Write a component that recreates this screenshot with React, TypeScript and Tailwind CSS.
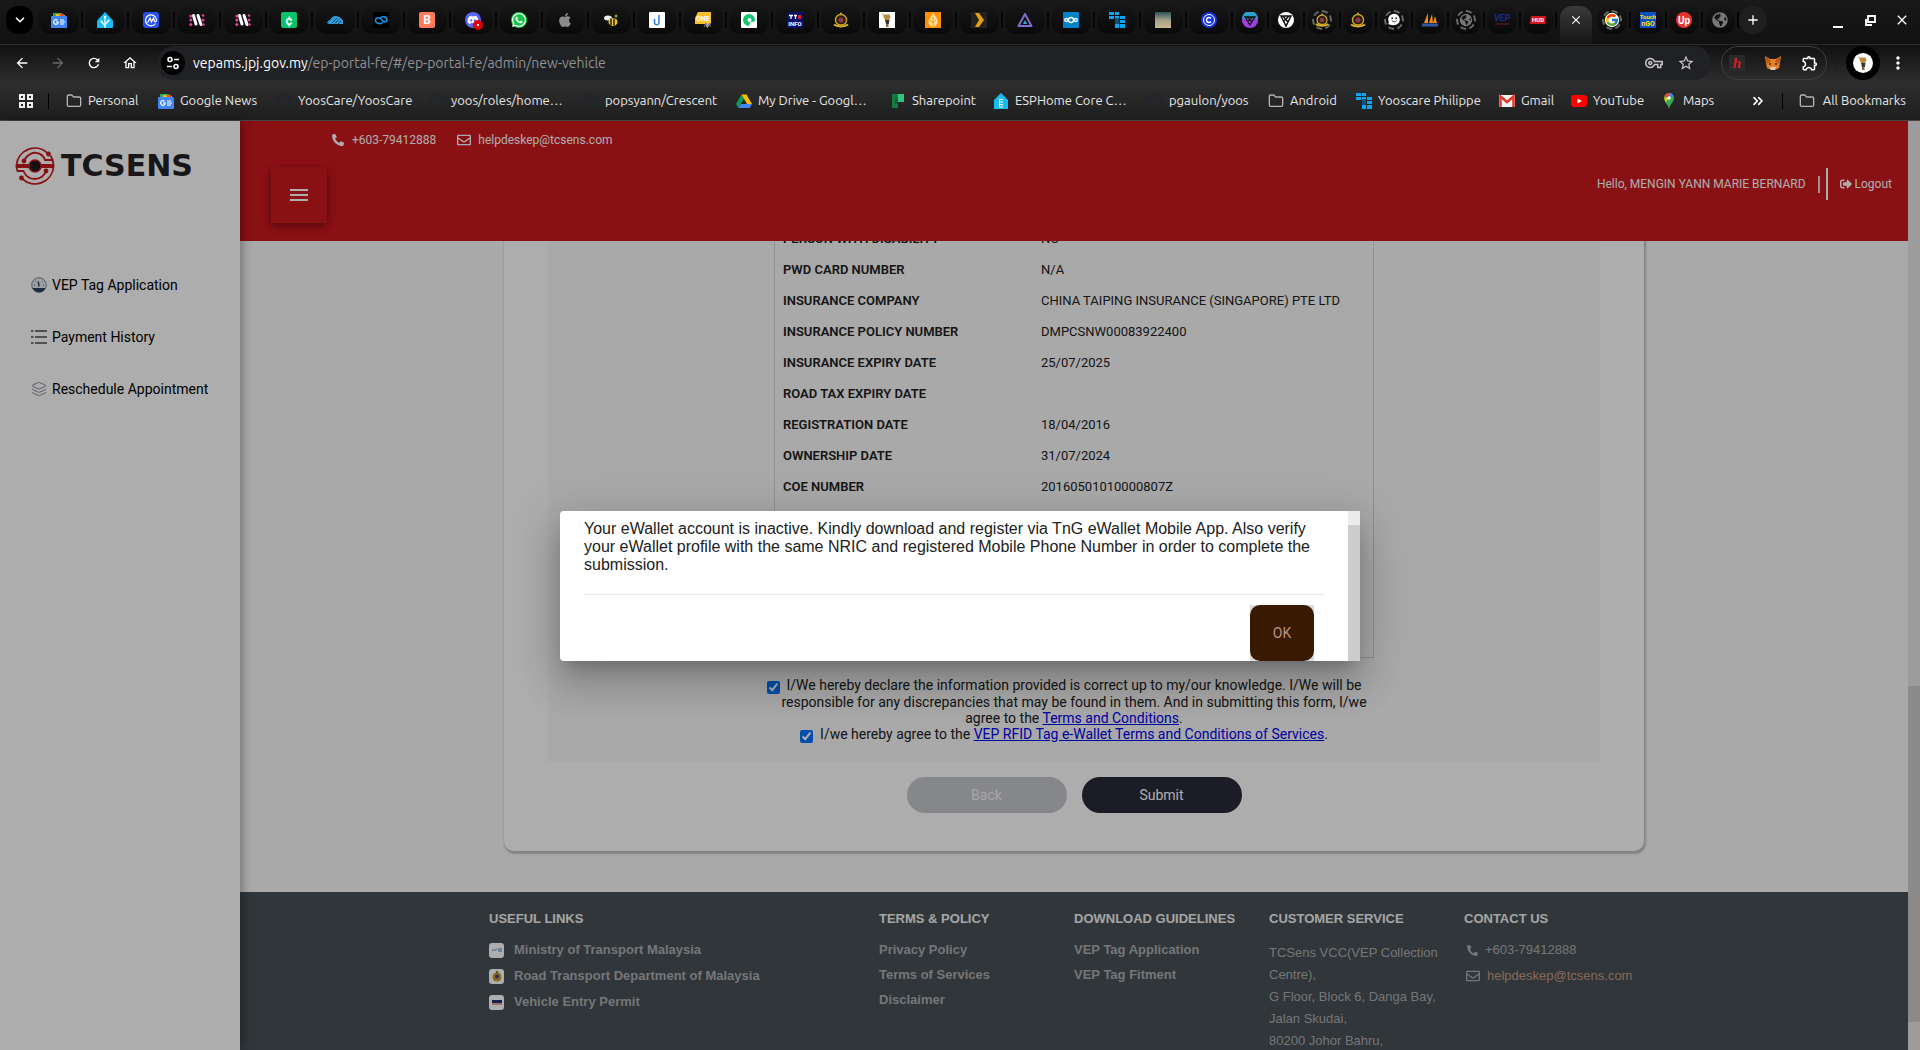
import React from 'react';
import { FaApple, FaGithub, FaPhoneAlt, FaRegEnvelope, FaSignOutAlt, FaWhatsapp, FaDiscord, FaGlobeAmericas } from 'react-icons/fa';
import { FcGoogle } from 'react-icons/fc';
import {
  MdAdd,
  MdArrowBack,
  MdArrowForward,
  MdClose,
  MdMenu,
  MdMoreVert,
  MdOutlineExtension,
  MdOutlineHome,
  MdOutlineVpnKey,
  MdRefresh,
  MdStarBorder,
} from 'react-icons/md';
import { ChevronDown, ChevronsRight, Folder, Layers } from 'lucide-react';

const Svg: React.FC<{ children: React.ReactNode }> = ({ children }) => (
  <svg viewBox="0 0 16 16" className="w-4 h-4 shrink-0">{children}</svg>
);

const Crest: React.FC = () => (
  <Svg>
    <path d="M8 0l2 3.500H6z" fill="#d9b22c" />
    <path d="M2.500 8a5.500 5.500 0 0 1 11 0c0 3-2 5-5.500 5S2.500 11 2.500 8z" fill="#262012" stroke="#c9a62c" strokeWidth="1.400" />
    <circle cx="8" cy="8" r="2.600" fill="#b3262b" />
    <path d="M6.500 8h3" stroke="#3a56b8" strokeWidth="1.500" />
    <path d="M1 12.500c3 2.500 11 2.500 14 0" stroke="#d9b22c" strokeWidth="2" fill="none" />
  </Svg>
);

const Robot: React.FC = () => (
  <Svg>
    <rect width="16" height="16" fill="#fff" />
    <path d="M4.500 2.500h6l1 2.500-1.500 3H6L4.500 5z" fill="#b98a3e" />
    <path d="M6 8h4.500l-.7 4H7z" fill="#3a3328" />
    <path d="M7 12h2.500v3H7z" fill="#8a6a38" />
    <path d="M3 1.500l2 2" stroke="#b98a3e" />
  </Svg>
);

const GoogleNews: React.FC = () => (
  <Svg>
    <path d="M2 1h9l1 4H2z" fill="#34a853" />
    <path d="M5 2l9 1-.5 3H5z" fill="#fbbc04" />
    <path d="M9 1.500l4 .5v3H9z" fill="#ea4335" />
    <rect y="4" width="16" height="12" rx="1" fill="#4285f4" />
    <path d="M5 10.200h2.200A2.300 2.300 0 1 1 6.500 8.300M9 8h4M9 10h5M9 12h4" stroke="#fff" strokeWidth="1.200" fill="none" />
  </Svg>
);

const HomeAssistant: React.FC = () => (
  <Svg>
    <path d="M8 0l8 8.500V15a1 1 0 0 1-1 1H1a1 1 0 0 1-1-1V8.500z" fill="#18bcf2" />
    <path d="M8 5v11M8 13.500L4.500 10M8 12.500l3.500-3.500" stroke="#fff" strokeWidth="1.200" fill="none" />
    <circle cx="8" cy="5" r="1.200" fill="#fff" />
    <circle cx="4.500" cy="9.500" r="1.100" fill="#fff" />
    <circle cx="11.500" cy="8.500" r="1.100" fill="#fff" />
  </Svg>
);

const Blocks: React.FC = () => (
  <Svg>
    <path
      d="M0 0h5v3H0zM6 0h4v3H6zM0 4h5v3H0zM6 4h4v3H6zM11 4h5v3h-5zM6 8h4v3H6zM11 8h5v3h-5zM6 12h4v4H6zM11 12h5v4h-5z"
      fill="#0aa5f5"
    />
    <path d="M6 6h4v6H6z" fill="#07557d" />
  </Svg>
);

const PinkDots: React.FC = () => (
  <Svg>
    <path d="M4.500 3.500L7 12M9 3.500l3 9" stroke="#fff" strokeWidth="3" fill="none" strokeLinecap="round" />
    <g fill="#e63fa0">
      <circle cx="1.800" cy="4" r="1.500" />
      <circle cx="1.800" cy="8" r="1.500" />
      <circle cx="1.800" cy="12.500" r="1.500" />
      <circle cx="14" cy="3.500" r="1.300" />
      <circle cx="14" cy="8" r="1.500" />
      <circle cx="14.500" cy="12.500" r="1.300" />
    </g>
  </Svg>
);

// Letter tile used by the simpler favicons
const Tile: React.FC<{ text: string; bg: string; fg?: string; size?: number }> = ({ text, bg, fg = '#fff', size = 10 }) => (
  <Svg>
    <rect width="16" height="16" rx="2" fill={bg} />
    <text x="8" y="8" dominantBaseline="central" textAnchor="middle" fontFamily="Roboto, sans-serif" fontWeight="700" fontSize={size} fill={fg}>
      {text}
    </text>
  </Svg>
);

const DashedRing: React.FC<{ children: React.ReactNode }> = ({ children }) => (
  <span className="flex items-center justify-center w-5 h-5 rounded-full border-2 border-dashed border-[#6a6a6a]">
    <span className="flex scale-90">{children}</span>
  </span>
);

const wideTabs: React.ReactNode[] = [
  <GoogleNews />,
  <HomeAssistant />,
  <Svg>
    <rect width="16" height="16" rx="3" fill="#2650f0" />
    <path d="M12.500 11.500A5.500 5.500 0 1 1 13.500 8c0 2-2 2.500-2.300.5L10.500 6 8.500 10 7 6l-2.200 4.500" stroke="#fff" strokeWidth="1.200" fill="none" />
  </Svg>,
  <PinkDots />,
  <PinkDots />,
  <Tile text="¢" bg="#09c16c" size={13} />,
  <Svg>
    <path d="M0 11a4 4 0 0 1 3-3 6 6 0 0 1 9-3 6 6 0 0 1 4 7H2z" fill="#2d9cdb" />
    <path d="M5 11l5-5M8 11.500l4-4M11 12l3-3" stroke="#0a3e5e" />
  </Svg>,
  <Svg>
    <rect width="16" height="16" fill="#000" />
    <path d="M10 10.500C7 13 2 11 2.500 8S7 5 9 8s5 2 5-.5S9 3.500 7 6" stroke="#1392e6" strokeWidth="1.600" fill="none" />
  </Svg>,
  <Tile text="B" bg="#ff7a59" size={12} />,
  <span className="relative flex">
    <FaDiscord className="w-4 h-4 text-white bg-[#5865f2] rounded-full p-0.5" />
    <span className="absolute -right-0.5 -bottom-0.5 w-2.5 h-2.5 rounded-full bg-[#e00000] flex items-center justify-center">
      <span className="w-0.5 h-0.5 bg-white" />
    </span>
  </span>,
  <span className="flex items-center justify-center w-4 h-4 rounded-full bg-[#19c34b]">
    <FaWhatsapp className="w-4 h-4 text-white" />
  </span>,
  <FaApple className="w-4 h-4 text-[#8a8a8a]" />,
  <Svg>
    <ellipse cx="5" cy="6" rx="4" ry="2.500" fill="#e9eef0" />
    <ellipse cx="10" cy="10" rx="4.500" ry="4" fill="#f1c928" />
    <path d="M8 6.500v7M11 6.500v7" stroke="#222" strokeWidth="1.500" />
    <circle cx="13" cy="4" r="1.500" fill="#6cae4f" />
  </Svg>,
  <Svg>
    <rect width="16" height="16" rx="1" fill="#fff" />
    <path d="M5.500 7v4a2.300 2.300 0 0 0 4.500 0V3" stroke="#2f7fe0" strokeWidth="1.500" fill="none" />
  </Svg>,
  <Svg>
    <path d="M3 0h13v11l-4 5-2-4H0V6z" fill="#fbc02d" />
    <text x="8" y="9" textAnchor="middle" fontFamily="Roboto, sans-serif" fontWeight="700" fontSize="7" fill="#fff">ONE</text>
    <path d="M9 15l2-4 1 3 3-3v4" stroke="#6a7ac8" fill="none" />
  </Svg>,
  <Svg>
    <rect width="16" height="16" rx="1" fill="#fff" />
    <path d="M8 14A6 6 0 1 1 14 8c0 2-3 2-4.500 2L8 14z" fill="#12c46b" />
    <circle cx="8.500" cy="8" r="2" fill="#fff" />
  </Svg>,
  <Svg>
    <rect width="16" height="16" fill="#0a0f6b" />
    <path d="M2 3.500h4M4 3v4M7 3.500h3M8.500 3v4" stroke="#fff" strokeWidth="1.300" />
    <rect x="11" y="3" width="3" height="4" fill="#e02020" />
    <text x="8" y="14" textAnchor="middle" fontFamily="Roboto, sans-serif" fontWeight="700" fontSize="6" fill="#fff">INFO</text>
  </Svg>,
  <Crest />,
  <Robot />,
  <Svg>
    <rect width="16" height="16" fill="#ff9000" />
    <path d="M8 1c2 3 5 5 4.500 9A4.500 4.500 0 0 1 3.500 10C3 7 7 5 8 1z" fill="#ffe0a8" />
    <path d="M8 5v9M5 8l3 3 3-3" stroke="#ff9000" fill="none" />
  </Svg>,
  <Svg>
    <rect width="16" height="16" fill="#222" />
    <path d="M4 1h4l5 7-5 7H4l4-7z" fill="#e5a00d" />
  </Svg>,
  <Svg>
    <path d="M8 2L14.500 14h-13z" stroke="#7c6fd0" strokeWidth="2" fill="none" strokeLinejoin="round" />
    <path d="M8 8l2 4H6z" fill="#3fa9dd" />
  </Svg>,
  <Svg>
    <rect width="16" height="16" rx="1" fill="#0082c9" />
    <g stroke="#fff" strokeWidth="1.300" fill="none">
      <circle cx="8" cy="8" r="2.500" />
      <circle cx="3.200" cy="8" r="1.500" />
      <circle cx="12.800" cy="8" r="1.500" />
    </g>
  </Svg>,
  <Blocks />,
  <span className="w-4 h-4 bg-linear-to-b from-[#29525a] via-[#a59e88] to-[#c8b994]" />,
  <Svg>
    <circle cx="8" cy="8" r="8" fill="#1633d8" />
    <circle cx="8" cy="8" r="5.500" stroke="#fff" fill="none" />
    <path d="M10 6.500a2.500 2.500 0 1 0 0 3" stroke="#fff" strokeWidth="1.500" fill="none" />
  </Svg>,
];

const narrowTabs: React.ReactNode[] = [
  <Svg>
    <circle cx="8" cy="8" r="8" fill="#a23fe0" />
    <path d="M0 7a8 8 0 0 1 16 0z" fill="#2d9fc9" />
    <path d="M3 5h10L8 13zM5 5l5 5M11 5l-5 4" stroke="#111" strokeWidth="1.300" fill="none" />
  </Svg>,
  <Svg>
    <circle cx="8" cy="8" r="8" fill="#fff" />
    <path d="M3 4h10L8 14zM5 4l5 6M11 4L6 9" stroke="#111" strokeWidth="1.500" fill="none" />
  </Svg>,
  <DashedRing><Crest /></DashedRing>,
  <Crest />,
  <DashedRing>
    <Svg>
      <path d="M8 1a6.500 6.500 0 0 1 4 11.500c-2 1.500-6 1.500-9 .5-1.500-.5-2-1-1-1.500C3 10.500 1.500 9 1.500 7.500A6.500 6.500 0 0 1 8 1z" fill="#fff" />
      <circle cx="6" cy="6" r="1" fill="#333" />
      <circle cx="10.500" cy="6" r="1" fill="#333" />
      <path d="M5.500 8.500c1.500 2 4 2 5.500 0" stroke="#333" fill="none" />
    </Svg>
  </DashedRing>,
  <Svg>
    <path d="M2 11L6 1v10zM7 11l3-9 1 9zM11 11l2-7 2 7z" fill="#f58a1f" />
    <path d="M0 13h16" stroke="#3556a8" strokeWidth="3" />
  </Svg>,
  <DashedRing><FaGlobeAmericas className="w-3.5 h-3.5 text-[#777]" /></DashedRing>,
  <Svg>
    <text x="8" y="9" textAnchor="middle" fontFamily="Roboto, sans-serif" fontStyle="italic" fontWeight="700" fontSize="9" fill="#1f2a86">VEP</text>
    <path d="M1 12h14" stroke="#4a1730" strokeWidth="1.500" />
  </Svg>,
  <Svg>
    <path d="M1 4h15l-1 8H0z" fill="#d0161b" />
    <text x="8" y="10" textAnchor="middle" fontFamily="Roboto, sans-serif" fontWeight="700" fontSize="6" fill="#fff">HUD</text>
  </Svg>,
];

const lastTabs: React.ReactNode[] = [
  <DashedRing><span className="rounded-full bg-white"><FcGoogle className="w-4 h-4" /></span></DashedRing>,
  <Svg>
    <rect width="16" height="16" fill="#0b50c4" />
    <text x="8" y="7" textAnchor="middle" fontFamily="Roboto, sans-serif" fontWeight="700" fontSize="6" fill="#ffe100">Touch</text>
    <text x="8" y="14" textAnchor="middle" fontFamily="Roboto, sans-serif" fontWeight="700" fontSize="7" fill="#ffe100">nGO</text>
  </Svg>,
  <Svg>
    <circle cx="8" cy="8" r="8" fill="#e8322d" />
    <text x="8" y="12" textAnchor="middle" fontFamily="Roboto, sans-serif" fontWeight="700" fontSize="10" fill="#fff">Up</text>
  </Svg>,
  <FaGlobeAmericas className="w-4 h-4 text-[#777]" />,
];

const FolderIcon = () => <Folder className="w-4 h-4 shrink-0 text-[#b4b4b4]" strokeWidth={2} />;
const GithubIcon = () => <FaGithub className="w-4 h-4 shrink-0 text-[#20262c]" />;

const bookmarks = [
  { label: 'Personal', width: 'w-[92px]', icon: <FolderIcon /> },
  { label: 'Google News', width: 'w-[118px]', icon: <GoogleNews /> },
  { label: 'YoosCare/YoosCare', width: 'w-[153px]', icon: <GithubIcon /> },
  { label: 'yoos/roles/home…', width: 'w-[154px]', icon: <GithubIcon /> },
  { label: 'popsyann/Crescent', width: 'w-[153px]', icon: <GithubIcon /> },
  {
    label: 'My Drive - Googl…',
    width: 'w-[154px]',
    icon: (
      <Svg>
        <path d="M5.500 1.500L0 11l2.500 4L8 5.500z" fill="#0f9d58" />
        <path d="M5.500 1.500h5L16 11h-5z" fill="#fbbc04" />
        <path d="M5 11h11l-2.500 4h-11z" fill="#4285f4" />
      </Svg>
    ),
  },
  {
    label: 'Sharepoint',
    width: 'w-[103px]',
    icon: (
      <Svg>
        <path d="M2 1h6v14H2z" fill="#107c41" />
        <path d="M8 1h6v8H8z" fill="#33c481" />
        <path d="M5 6h3v5H5z" fill="#185c37" />
      </Svg>
    ),
  },
  {
    label: 'ESPHome Core C…',
    width: 'w-[154px]',
    icon: (
      <Svg>
        <path d="M8 0l7 7v9H1V7z" fill="#18bcf2" />
        <path d="M6 6.500h4M6.500 6.500V14H10M7 9h3M7 11.500h3" stroke="#fff" fill="none" />
      </Svg>
    ),
  },
  { label: 'pgaulon/yoos', width: 'w-[121px]', icon: <GithubIcon /> },
  { label: 'Android', width: 'w-[88px]', icon: <FolderIcon /> },
  { label: 'Yooscare Philippe', width: 'w-[143px]', icon: <Blocks /> },
  {
    label: 'Gmail',
    width: 'w-[72px]',
    icon: (
      <Svg>
        <path d="M0 2h16v12H0z" fill="#f2f2f2" />
        <path d="M1.500 14V3.500L8 9l6.500-5.500V14" stroke="#e0392d" strokeWidth="2.500" fill="none" />
      </Svg>
    ),
  },
  {
    label: 'YouTube',
    width: 'w-[90px]',
    icon: (
      <Svg>
        <rect y="2" width="16" height="12" rx="3" fill="#f00" />
        <path d="M6.500 5.500v5L11 8z" fill="#fff" />
      </Svg>
    ),
  },
  {
    label: 'Maps',
    width: 'w-[80px]',
    icon: (
      <Svg>
        <path d="M8 0a5 5 0 0 0-5 5c0 4 4 6 5 11 1-5 5-7 5-11a5 5 0 0 0-5-5z" fill="#34a853" />
        <path d="M8 0a5 5 0 0 0-4.500 3L8 6z" fill="#ea4335" />
        <path d="M8 0a5 5 0 0 1 4.500 3L8 5z" fill="#4285f4" />
        <path d="M3.200 4L8 5l-3.500 4.500z" fill="#fbbc04" />
        <circle cx="8" cy="5" r="1.700" fill="#fff" />
      </Svg>
    ),
  },
];

const details = [
  ['PERSON WITH DISABILITY', 'NO'],
  ['PWD CARD NUMBER', 'N/A'],
  ['INSURANCE COMPANY', 'CHINA TAIPING INSURANCE (SINGAPORE) PTE LTD'],
  ['INSURANCE POLICY NUMBER', 'DMPCSNW00083922400'],
  ['INSURANCE EXPIRY DATE', '25/07/2025'],
  ['ROAD TAX EXPIRY DATE', ''],
  ['REGISTRATION DATE', '18/04/2016'],
  ['OWNERSHIP DATE', '31/07/2024'],
  ['COE NUMBER', '20160501010000807Z'],
];

const Tab: React.FC<{ narrow?: boolean; children: React.ReactNode }> = ({ narrow, children }) => (
  <div className={narrow ? 'flex items-center justify-center w-9 shrink-0' : 'flex items-center justify-center w-[46px] shrink-0'}>
    <button className="flex-1 mx-0.5 h-7 rounded-xl bg-linear-to-b from-[#161616] to-[#090909] flex items-center justify-center">
      {children}
    </button>
    <span className="w-0.5 h-4 bg-[#050505]" />
  </div>
);

const BrowserChrome: React.FC = () => (
  <div className="shrink-0 font-['Ubuntu','Noto_Sans',sans-serif] text-white border-b border-[#454545]">
    {/* Tab strip */}
    <div className="h-[45px] flex items-start bg-linear-to-b from-[#191919] to-[#111] border-b border-[#2c2c2c] pl-1.5 pr-2.5">
      <button aria-label="Search tabs" className="mt-1.5 mr-1 w-[27px] h-7 rounded-xl bg-black flex items-center justify-center">
        <ChevronDown className="w-3.5 h-3.5" strokeWidth={3} />
      </button>
      <div className="mt-1.5 h-7 flex">
        {wideTabs.map((icon, i) => <Tab key={i}>{icon}</Tab>)}
        {narrowTabs.map((icon, i) => <Tab key={i} narrow>{icon}</Tab>)}
      </div>
      <button aria-label="Close tab" className="mt-1.5 mx-[3px] w-8 h-[38px] pb-2.5 rounded-t-xl bg-linear-to-b from-[#3a3a3a] to-[#161616] flex items-center justify-center">
        <MdClose className="w-3.5 h-3.5" />
      </button>
      <div className="mt-1.5 h-7 flex">
        {lastTabs.map((icon, i) => <Tab key={i} narrow>{icon}</Tab>)}
      </div>
      <button aria-label="New tab" className="mt-1.5 w-7 h-7 rounded-full bg-[#1f1f1f] flex items-center justify-center">
        <MdAdd className="w-4 h-4" />
      </button>
      <div className="ml-auto mt-1.5 h-7 flex items-center gap-4">
        <button aria-label="Minimize" className="w-4 h-4 flex items-end justify-center"><span className="w-2.5 h-0.5 bg-white" /></button>
        <button aria-label="Restore" className="w-4 h-4">
          <svg viewBox="0 0 16 16" className="w-4 h-4" fill="none" stroke="#fff" strokeWidth="1.800"><path d="M6 4h7v6H6zM4 7v6h6" /></svg>
        </button>
        <button aria-label="Close" className="w-4 h-4"><MdClose className="w-4 h-4" /></button>
      </div>
    </div>

    <div className="bg-linear-to-b from-[#111] via-[#2e2e2e] to-[#1e1e1e]">
      {/* Toolbar */}
      <div className="h-9 flex items-center pl-3.5 pr-3">
        <div className="flex gap-5 mr-[19px]">
          <button aria-label="Back"><MdArrowBack className="w-4 h-4" /></button>
          <button aria-label="Forward"><MdArrowForward className="w-4 h-4 text-[#6a6a6a]" /></button>
          <button aria-label="Reload"><MdRefresh className="w-4 h-4" /></button>
          <button aria-label="Home"><MdOutlineHome className="w-4 h-4" /></button>
        </div>
        <div className="flex-1 h-[34px] rounded-full bg-[#202124] flex items-center pl-1 pr-4">
          <button aria-label="Site information" className="w-6 h-6 rounded-full bg-black flex items-center justify-center mr-2">
            <svg viewBox="0 0 16 16" className="w-4 h-4" fill="none" stroke="#fff" strokeWidth="1.600">
              <circle cx="5" cy="4.500" r="2" /><path d="M9 4.500h5M2 11.500h5" /><circle cx="11" cy="11.500" r="2" />
            </svg>
          </button>
          <span className="text-sm">vepams.jpj.gov.my<span className="text-[#909194]">/ep-portal-fe/#/ep-portal-fe/admin/new-vehicle</span></span>
          <div className="ml-auto flex gap-3.5 items-center text-[#c7c7c7]">
            <MdOutlineVpnKey className="w-[18px] h-[18px]" />
            <MdStarBorder className="w-[18px] h-[18px]" />
          </div>
        </div>
        <div className="ml-2.5 w-[106px] h-[34px] rounded-full border border-[#404040] flex items-center justify-center gap-5">
          <span className="w-4 h-4 bg-[#2a2a2a] text-center text-[15px] leading-4 italic font-bold font-['Liberation_Serif',serif] text-[#d81e1e]">h</span>
          <svg viewBox="0 0 16 16" className="w-4 h-4">
            <path d="M0 1l5 3h6l5-3-1 7-1 5-4 2H6l-4-2-1-5z" fill="#e8821e" />
            <path d="M0 1l6 5-4 3zM16 1l-6 5 4 3z" fill="#b5571a" />
            <path d="M5 12h6l-1 3H6z" fill="#d9c8b8" />
            <circle cx="5" cy="9" r="1" fill="#222" /><circle cx="11" cy="9" r="1" fill="#222" />
          </svg>
          <MdOutlineExtension className="w-[18px] h-[18px]" />
        </div>
        <span className="mx-[9px] w-px h-4 bg-[#1a1a1a]" />
        <button aria-label="Profile" className="w-[34px] h-[34px] rounded-full bg-black flex items-center justify-center">
          <span className="w-5 h-5 rounded-full bg-white flex items-center justify-center overflow-hidden"><Robot /></span>
        </button>
        <button aria-label="Menu" className="ml-2"><MdMoreVert className="w-5 h-5" /></button>
      </div>

      {/* Bookmarks bar */}
      <div className="h-[39px] flex items-center pl-[18px] pr-3.5 text-[13px]">
        <svg viewBox="0 0 16 16" className="w-4 h-4 shrink-0" fill="none" stroke="#eee" strokeWidth="2">
          <path d="M2 2h4v4H2zM10 2h4v4h-4zM2 10h4v4H2zM10 10h4v4h-4z" />
        </svg>
        <span className="ml-3.5 mr-[17px] w-px h-4 bg-black" />
        {bookmarks.map((b) => (
          <a key={b.label} href="#" className={`${b.width} shrink-0 flex items-center gap-1.5 whitespace-nowrap text-[#e6e6e6]`}>
            {b.icon}
            {b.label}
          </a>
        ))}
        <div className="ml-auto flex items-center gap-4">
          <ChevronsRight className="w-4 h-4" strokeWidth={2.5} />
          <span className="w-px h-4 bg-black" />
          <a href="#" className="flex items-center gap-2 whitespace-nowrap text-[#e6e6e6]"><FolderIcon />All Bookmarks</a>
        </div>
      </div>
    </div>
  </div>
);

const Logo: React.FC = () => (
  <div className="flex items-center gap-1.5">
    <svg viewBox="0 0 40 40" className="w-10 h-10 shrink-0" fill="none" stroke="#cb181d" strokeWidth="1.800">
      <path d="M32.500 7A18.500 18.500 0 0 0 1.500 19H14M26 19h12.500a18.500 18.500 0 0 0-3-9.500" />
      <path d="M7.500 33a18.500 18.500 0 0 0 31-12H26M14 21H1.500a18.500 18.500 0 0 0 1 4h6c2 5 6 8 11.500 8s10-4 11-8" />
      <path d="M9 14.500c3-6 9-8.500 13-7.500 5 1 7 4 8 7h7" />
      <circle cx="33.500" cy="8" r="1.500" fill="#cb181d" />
      <circle cx="9" cy="15" r="1.500" fill="#cb181d" />
      <circle cx="31" cy="25" r="1.500" fill="#cb181d" />
      <circle cx="6.500" cy="32" r="1.500" fill="#cb181d" />
      <circle cx="20" cy="20" r="6" fill="#1d1b1d" strokeWidth="1.500" />
    </svg>
    <span className="font-['DejaVu_Sans',sans-serif] font-bold text-[30px] leading-10 text-[#242124]">TCSENS</span>
  </div>
);

const Sidebar: React.FC = () => (
  <aside className="relative z-20 w-60 shrink-0 bg-white shadow-[2px_0_10px_rgba(0,0,0,0.35)] pt-[25px] pl-[15px]">
    <Logo />
    <nav className="mt-[89px] ml-4 flex flex-col gap-8 text-sm text-black">
      <a href="#" className="flex items-center gap-[5px] h-5">
        <svg viewBox="0 0 16 16" className="w-4 h-4">
          <circle cx="8" cy="8" r="7.300" fill="#e4ecf2" stroke="#7b8794" />
          <path d="M1.500 11h13A7.300 7.300 0 0 1 8 15.300 7.300 7.300 0 0 1 1.500 11z" fill="#2b4257" />
          <path d="M7.300 4.500L8 9.500" stroke="#2b4257" strokeWidth="1.500" />
          <path d="M3 8h1M12 8h1M4.500 4.500l.6.6M11.500 4.500l-.6.6" stroke="#2b4257" />
        </svg>
        VEP Tag Application
      </a>
      <a href="#" className="flex items-center gap-[5px] h-5">
        <svg viewBox="0 0 16 16" className="w-4 h-4" stroke="#777" strokeWidth="2">
          <path d="M0 2h2.500M4 2h12M0 8h2.500M4 8h12M0 14h2.500M4 14h12" />
        </svg>
        Payment History
      </a>
      <a href="#" className="flex items-center gap-[5px] h-5"><Layers className="w-4 h-4 text-[#868e99]" strokeWidth={1.5} />Reschedule Appointment</a>
    </nav>
  </aside>
);

const Header: React.FC = () => (
  <header className="relative z-10 h-[120px] shrink-0 bg-[#cb181d] text-white text-xs flex justify-between">
    <div>
      <div className="h-[38px] pl-[92px] flex items-center">
        <FaPhoneAlt className="w-3 h-3 mr-2" />
        +603-79412888
        <FaRegEnvelope className="w-3.5 h-3.5 ml-[21px] mr-[7px]" />
        helpdeskep@tcsens.com
      </div>
      <button aria-label="Toggle menu" className="mt-2 ml-[31px] w-14 h-14 flex items-center justify-center shadow-[0_3px_8px_rgba(0,0,0,0.4)]">
        <MdMenu className="w-6 h-6" />
      </button>
    </div>
    <div className="mt-[45px] mr-4 h-9 flex items-center">
      <span>Hello, MENGIN YANN MARIE BERNARD</span>
      <span className="ml-3 w-0.5 h-[17px] bg-white/80" />
      <span className="ml-1.5 w-0.5 h-8 bg-white" />
      <a href="#" className="ml-3 flex items-center gap-[3px]"><FaSignOutAlt className="w-3 h-3" />Logout</a>
    </div>
  </header>
);

const Application: React.FC = () => (
  <main className="flex-1 bg-[#f9f9f9] px-4">
    <section className="max-w-[1140px] mx-auto mb-[39px] px-11 pb-[38px] bg-white rounded-b-[10px] shadow-[1px_2px_2px_1px_rgba(0,0,0,0.22)]">
      <div className="-mt-[19px] bg-[#f9f9f9] pb-[19px]">
        <div className="max-w-[600px] mx-auto border border-[#d4d4d4] pb-[155px]">
          <table className="w-full text-[13px] text-[#212121]">
            <tbody>
              {details.map(([label, value]) => (
                <tr key={label} className="h-[31px]">
                  <th scope="row" className="w-[266px] p-0 pl-2 text-left font-semibold">{label}</th>
                  <td className="p-0">{value}</td>
                </tr>
              ))}
            </tbody>
          </table>
        </div>
        <div className="max-w-[600px] mx-auto mt-[19px] text-center text-sm leading-4 text-[#212121]">
          <div>
            <input id="declare" type="checkbox" defaultChecked className="w-[13px] h-[13px] -ml-5 mr-[7px] align-[-4px]" />
            <label htmlFor="declare">
              I/We hereby declare the information provided is correct up to my/our knowledge. I/We will be responsible for any
              discrepancies that may be found in them. And in submitting this form, I/we agree to the{' '}
              <a href="#" className="text-[#0000ee] underline">Terms and Conditions</a>.
            </label>
          </div>
          <div>
            <input id="agree" type="checkbox" defaultChecked className="w-[13px] h-[13px] -ml-5 mr-[7px] align-[-4px]" />
            <label htmlFor="agree">
              I/we hereby agree to the{' '}
              <a href="#" className="text-[#0000ee] underline">VEP RFID Tag e-Wallet Terms and Conditions of Services</a>.
            </label>
          </div>
        </div>
      </div>
      <div className="mt-[15px] flex justify-center gap-[15px] text-sm text-white">
        <button className="w-40 h-9 rounded-full bg-[#c6c7cd] text-white/80">Back</button>
        <button className="w-40 h-9 rounded-full bg-[#2a2a38]">Submit</button>
      </div>
    </section>
  </main>
);

const SiteBadge: React.FC<{ children: React.ReactNode }> = ({ children }) => (
  <span className="w-[15px] h-[15px] rounded-[3px] bg-white flex items-center justify-center overflow-hidden">{children}</span>
);

const Footer: React.FC = () => (
  <footer className="h-[158px] shrink-0 overflow-hidden bg-[#485055] pt-[18px] font-['Liberation_Sans',Arial,sans-serif] text-[13px] text-[#acafb1]">
    <div className="max-w-[1170px] mx-auto grid grid-cols-6">
      <div className="col-span-2">
        <h4 className="font-bold leading-[18px] mb-[9px] text-[#f3f3f3]">USEFUL LINKS</h4>
        <ul className="font-bold">
          <li>
            <a href="#" className="flex items-center gap-2.5 h-[26px]">
              <SiteBadge><svg viewBox="0 0 14 14" className="w-3.5 h-3.5"><path d="M2 8c2-3 3 1 5-2M8 8h4M8 6h4" stroke="#4a7fc0" fill="none" /></svg></SiteBadge>
              Ministry of Transport Malaysia
            </a>
          </li>
          <li>
            <a href="#" className="flex items-center gap-2.5 h-[26px]">
              <SiteBadge><svg viewBox="0 0 14 14" className="w-3.5 h-3.5"><circle cx="7" cy="8" r="4.500" fill="#c4a128" /><circle cx="7" cy="7.500" r="2" fill="#4a3b9a" /><path d="M7 1l1.500 3h-3z" fill="#a8741d" /></svg></SiteBadge>
              Road Transport Department of Malaysia
            </a>
          </li>
          <li>
            <a href="#" className="flex items-center gap-2.5 h-[26px]">
              <SiteBadge><svg viewBox="0 0 14 14" className="w-3.5 h-3.5"><path d="M2 6.500h10" stroke="#26306e" strokeWidth="3" /><path d="M2 9h10" stroke="#c0504d" /></svg></SiteBadge>
              Vehicle Entry Permit
            </a>
          </li>
        </ul>
      </div>
      <div>
        <h4 className="font-bold leading-[18px] mb-[9px] text-[#f3f3f3]">TERMS &amp; POLICY</h4>
        <ul className="font-bold leading-[25px]">
          <li><a href="#">Privacy Policy</a></li>
          <li><a href="#">Terms of Services</a></li>
          <li><a href="#">Disclaimer</a></li>
        </ul>
      </div>
      <div>
        <h4 className="font-bold leading-[18px] mb-[9px] text-[#f3f3f3]">DOWNLOAD GUIDELINES</h4>
        <ul className="font-bold leading-[25px]">
          <li><a href="#">VEP Tag Application</a></li>
          <li><a href="#">VEP Tag Fitment</a></li>
        </ul>
      </div>
      <div>
        <h4 className="font-bold leading-[18px] mb-3.5 text-[#f3f3f3]">CUSTOMER SERVICE</h4>
        <p className="leading-[22px]">
          TCSens VCC(VEP Collection<br />Centre),<br />G Floor, Block 6, Danga Bay,<br />Jalan Skudai,<br />80200 Johor Bahru,
        </p>
      </div>
      <div>
        <h4 className="font-bold leading-[18px] mb-[9px] text-[#f3f3f3]">CONTACT US</h4>
        <p className="flex items-center gap-[7px] h-[26px] pl-[3px]"><FaPhoneAlt className="w-[11px] h-[11px]" />+603-79412888</p>
        <p className="flex items-center gap-[7px] h-[26px] pl-0.5">
          <FaRegEnvelope className="w-3.5 h-3.5" />
          <a href="#" className="text-[#c89b85]">helpdeskep@tcsens.com</a>
        </p>
      </div>
    </div>
  </footer>
);

const WalletDialog: React.FC = () => (
  <div className="absolute inset-0 z-30 bg-black/32 flex items-center justify-center">
    <div
      role="dialog"
      aria-modal="true"
      className="w-[800px] h-[150px] flex bg-white rounded-l font-['Liberation_Sans',Arial,sans-serif] shadow-[0_11px_15px_-7px_rgba(0,0,0,0.2),0_24px_38px_3px_rgba(0,0,0,0.14),0_9px_46px_8px_rgba(0,0,0,0.12)]"
    >
      <div className="flex-1 px-6 pt-[9px] overflow-hidden">
        <p className="text-base leading-[18px] text-[#212121]">
          Your eWallet account is inactive. Kindly download and register via TnG eWallet Mobile App. Also verify your eWallet
          profile with the same NRIC and registered Mobile Phone Number in order to complete the submission.
        </p>
        <hr className="mt-5 border-[#e8e8e8]" />
        <div className="mt-2.5 mr-2.5 flex justify-end">
          <span className="bg-[#dcdcdc]">
            <button className="block w-16 h-14 rounded-[10px] bg-[#381a02] text-sm font-['Roboto',sans-serif] text-[#bd927a]">OK</button>
          </span>
        </div>
      </div>
      {/* Scrollbar */}
      <div className="w-3 bg-[#ececec] pt-3.5"><div className="h-full bg-[#cdcdcd]" /></div>
    </div>
  </div>
);

export default function App() {
  return (
    <div className="h-screen flex flex-col overflow-hidden font-['Roboto',sans-serif]">
      <BrowserChrome />
      <div className="relative flex-1 min-h-0 flex">
        <Sidebar />
        <div className="flex-1 min-w-0 flex flex-col">
          <Header />
          <Application />
          <Footer />
        </div>
        <div className="w-3 bg-[#e6e6e6] pt-[565px] pb-7"><div className="h-full bg-[#ccc]" /></div>
        <WalletDialog />
      </div>
    </div>
  );
}
